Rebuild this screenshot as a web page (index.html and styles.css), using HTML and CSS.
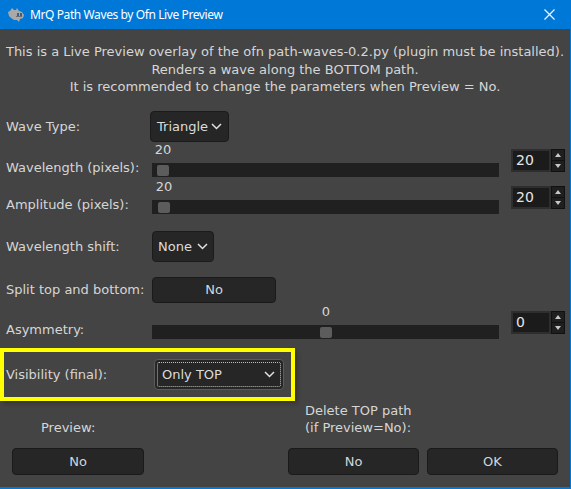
FILE: index.html
```html
<!DOCTYPE html>
<html lang="en">
<head>
    <meta charset="UTF-8">
    <meta name="viewport" content="width=device-width, initial-scale=1.0">
    <title>MrQ Path Waves by Ofn Live Preview</title>
    <link rel="stylesheet" href="styles.css">
</head>
<body>
    <div class="window">
        <header class="titlebar">
            <svg class="app-icon" width="18" height="16" viewBox="0 0 18 16">
                <path d="M1 5 L3 4 L5 1 L7 3 L9 3 L10 1 L12 4 L15 5 L17 8 L16 11 L13 12 L12 15 L10 13 L7 13 L4 11 L2 9 Z" fill="#a9a9a9"/>
                <rect x="10" y="6" width="2" height="3" fill="#3d5f86"/>
                <rect x="13" y="6" width="2" height="3" fill="#3d5f86"/>
                <rect x="9" y="9" width="6" height="1" fill="#6e6e6e"/>
            </svg>
            <span class="title">MrQ Path Waves by Ofn Live Preview</span>
            <svg class="close" width="11" height="11" viewBox="0 0 11 11">
                <path d="M0.5 0.5 L10.5 10.5 M10.5 0.5 L0.5 10.5" stroke="#fff" stroke-width="1.1"/>
            </svg>
        </header>

        <main class="dialog">
            <p class="intro">
                This is a Live Preview overlay of the ofn path-waves-0.2.py (plugin must be installed).<br>
                Renders a wave along the BOTTOM path.<br>
                It is recommended to change the parameters when Preview = No.
            </p>

            <div class="row row-combo row-first">
                <span class="row-label">Wave Type:</span>
                <div class="combo combo-wave">
                    <span>Triangle</span>
                    <svg class="chevron" width="11" height="7" viewBox="0 0 11 7"><path d="M1 1 L5.5 5.5 L10 1" fill="none" stroke="#e0e0e0" stroke-width="1.5"/></svg>
                </div>
            </div>

            <div class="row row-scale">
                <span class="row-label">Wavelength (pixels):</span>
                <div class="scale">
                    <span class="scale-value" style="left: 11px">20</span>
                    <div class="trough"><span class="slider" style="left: 5px"></span></div>
                </div>
                <div class="spin">
                    <span class="spin-entry">20</span>
                    <span class="spin-buttons">
                        <span class="spin-btn"><i class="arrow-up"></i></span>
                        <span class="spin-btn"><i class="arrow-down"></i></span>
                    </span>
                </div>
            </div>

            <div class="row row-scale">
                <span class="row-label">Amplitude (pixels):</span>
                <div class="scale">
                    <span class="scale-value" style="left: 12px">20</span>
                    <div class="trough"><span class="slider" style="left: 6px"></span></div>
                </div>
                <div class="spin">
                    <span class="spin-entry">20</span>
                    <span class="spin-buttons">
                        <span class="spin-btn"><i class="arrow-up"></i></span>
                        <span class="spin-btn"><i class="arrow-down"></i></span>
                    </span>
                </div>
            </div>

            <div class="row row-combo row-shift">
                <span class="row-label">Wavelength shift:</span>
                <div class="combo combo-shift">
                    <span>None</span>
                    <svg class="chevron" width="11" height="7" viewBox="0 0 11 7"><path d="M1 1 L5.5 5.5 L10 1" fill="none" stroke="#e0e0e0" stroke-width="1.5"/></svg>
                </div>
            </div>

            <div class="row row-toggle">
                <span class="row-label">Split top and bottom:</span>
                <button class="btn btn-split">No</button>
            </div>

            <div class="row row-scale row-asym">
                <span class="row-label">Asymmetry:</span>
                <div class="scale">
                    <span class="scale-value" style="left: 174px">0</span>
                    <div class="trough"><span class="slider" style="left: 168px"></span></div>
                </div>
                <div class="spin">
                    <span class="spin-entry">0</span>
                    <span class="spin-buttons">
                        <span class="spin-btn"><i class="arrow-up"></i></span>
                        <span class="spin-btn"><i class="arrow-down"></i></span>
                    </span>
                </div>
            </div>

            <div class="highlight">
                <div class="row row-visibility">
                    <span class="row-label">Visibility (final):</span>
                    <div class="combo combo-visibility">
                        <span class="focus-ring"></span>
                        <span>Only TOP</span>
                        <svg class="chevron" width="11" height="7" viewBox="0 0 11 7"><path d="M1 1 L5.5 5.5 L10 1" fill="none" stroke="#e0e0e0" stroke-width="1.5"/></svg>
                    </div>
                </div>
            </div>

            <div class="footer">
                <span class="footer-label label-preview">Preview:</span>
                <span class="footer-label label-delete">Delete TOP path<br>(if Preview=No):</span>
                <button class="btn btn-foot btn-preview">No</button>
                <button class="btn btn-foot btn-delete">No</button>
                <button class="btn btn-foot btn-ok">OK</button>
            </div>
        </main>
    </div>
</body>
</html>
```

FILE: styles.css
```css
body {
    margin: 0;
    background-color: #444444;
    font-family: "DejaVu Sans", Verdana, sans-serif;
    font-size: 13px;
    color: #d6d6d6;
}

.window {
    width: 571px;
    height: 489px;
    overflow: hidden;
    display: flex;
    flex-direction: column;
}

/* title bar */
.titlebar {
    height: 29px;
    flex: none;
    background-color: #0078d7;
    display: flex;
    align-items: center;
    padding: 0 0 0 7px;
}

.app-icon {
    margin-right: 5px;
    margin-top: 1px;
}

.title {
    font-family: "Noto Sans", "Open Sans", sans-serif;
    font-size: 12px;
    letter-spacing: -0.4px;
    color: #ffffff;
    flex: 1;
}

.close {
    margin-right: 16px;
}

/* dialog body */
.dialog {
    flex: 1;
    border-right: 1px solid #0078d7;
    border-bottom: 2px solid #0078d7;
    padding-top: 14px;
}

.intro {
    margin: 0 0 15px;
    text-align: center;
    line-height: 17.5px;
    white-space: nowrap;
}

.row {
    display: grid;
    grid-template-columns: 146px 347px 1fr;
    padding: 0 5px 0 6px;
}

.row-label {
    line-height: 17px;
    white-space: nowrap;
}

.row-combo,
.row-toggle,
.row-visibility {
    align-items: center;
}

.row-combo { height: 31px; }
.row-shift { margin-top: 14px; }
.row-toggle { height: 26px; margin-top: 15px; }

.row-first + .row-scale { margin-top: 1px; }

/* combo boxes */
.combo {
    position: relative;
    display: flex;
    align-items: center;
    justify-content: space-between;
    box-sizing: border-box;
    height: 31px;
    padding: 0 6px 0 6px;
    background-color: #262626;
    border: 1px solid #1b1b1b;
    border-radius: 4px;
    color: #dcdcdc;
}

.combo-wave { width: 79px; margin-left: -2px; }
.combo-shift { width: 62px; padding-left: 5px; padding-right: 5px; }
.combo-visibility {
    width: 130px;
    margin-left: 2px;
    padding: 0 8px 0 7px;
    border-color: #5b5b5b;
}

.focus-ring {
    position: absolute;
    inset: 2px;
    border: 1px dotted #bdbdbd;
    border-radius: 2px;
}

/* sliders */
.row-scale { height: 37px; }
.row-asym { margin-top: 2px; }

.row-scale .row-label {
    align-self: end;
    margin-bottom: 4px;
}

.scale {
    position: relative;
    padding-top: 14px;
}

.scale-value {
    position: absolute;
    top: 0;
    line-height: 14px;
    transform: translateX(-50%);
}

.trough {
    position: relative;
    height: 14px;
    margin-top: 6px;
    background-color: #202020;
}

.slider {
    position: absolute;
    top: 2px;
    width: 12px;
    height: 11px;
    border-radius: 2px;
    background-color: #5c5c5c;
}

/* spin buttons */
.spin {
    justify-self: end;
    align-self: start;
    margin-top: 6px;
    display: flex;
    width: 54px;
    height: 23px;
}

.spin-entry {
    flex: 1;
    box-sizing: border-box;
    padding-left: 3px;
    line-height: 19px;
    font-size: 14px;
    color: #e6e6e6;
    background-color: #1b1b1b;
    border: 2px solid #2e2e2e;
}

.spin-buttons {
    width: 14px;
    display: flex;
    flex-direction: column;
}

.spin-btn {
    flex: 1;
    display: flex;
    align-items: center;
    justify-content: center;
    background-color: #1f1f1f;
    border: 1px solid #111;
}

.spin-btn + .spin-btn { border-top: none; }

.arrow-up,
.arrow-down {
    width: 0;
    height: 0;
    border-left: 3.5px solid transparent;
    border-right: 3.5px solid transparent;
}

.arrow-up { border-bottom: 4px solid #c8c8c8; }
.arrow-down { border-top: 4px solid #c8c8c8; }

/* buttons */
.btn {
    box-sizing: border-box;
    font-family: inherit;
    font-size: 13px;
    color: #d0d6dc;
    background-color: #262626;
    border: 1px solid #1a1a1a;
    border-radius: 4px;
    padding: 0;
}

.btn-split { width: 124px; height: 26px; }

/* highlighted row */
.highlight {
    margin-top: 6px;
    width: 295px;
    height: 53px;
    box-sizing: border-box;
    border: 4px solid #ffff00;
    box-shadow: 3px 3px 4px rgba(0, 0, 0, 0.2);
    display: flex;
    align-items: center;
}

.row-visibility {
    padding: 0 0 0 2px;
    grid-template-columns: 146px 1fr;
    width: 100%;
}

/* footer */
.footer {
    display: grid;
    grid-template-columns: 132px 144px 131px 139px;
    grid-template-rows: 36px 27px;
    row-gap: 11px;
    padding: 0 12px;
}

.footer-label {
    align-self: end;
    line-height: 17.5px;
}

.label-preview {
    grid-column: 1;
    padding-left: 29px;
}

.label-delete {
    grid-column: 3;
    padding-left: 17px;
    white-space: nowrap;
}

.btn-foot { width: 131px; height: 27px; }
.btn-preview { grid-column: 1; grid-row: 2; width: 132px; }
.btn-delete { grid-column: 3; grid-row: 2; }
.btn-ok { grid-column: 4; grid-row: 2; justify-self: end; }
```
